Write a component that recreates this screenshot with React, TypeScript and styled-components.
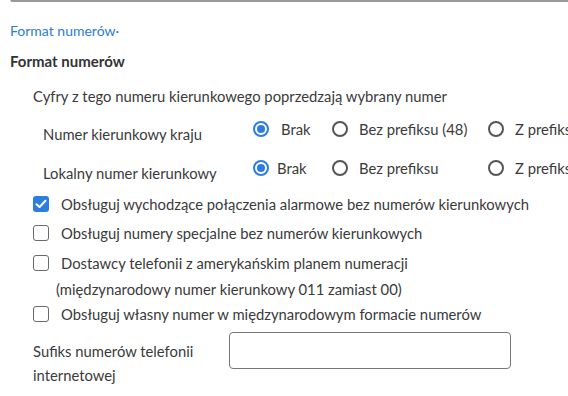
import styled, { createGlobalStyle } from 'styled-components';

const GlobalStyle = createGlobalStyle`
  body {
    margin: 0;
    background: #fff;
    font-family: Lato, "Open Sans", sans-serif;
    color: #3a3a3a;
  }
`;

const Page = styled.div`
  width: 568px;
  height: 396px;
  overflow: hidden;
  padding-left: 10px;
  box-sizing: border-box;
`;

const TopEdge = styled.div`
  height: 0;
  border-left: 1px solid #aaa;
  border-bottom: 2px solid #999;
  border-bottom-left-radius: 2px;
  margin-right: -10px;
`;

const Crumb = styled.a`
  display: block;
  margin-top: 19px;
  font-size: 14px;
  line-height: 20px;
  color: #2b7bd8;
  text-decoration: none;
`;

const Heading = styled.h2`
  margin: 9px 0 0;
  font-size: 15px;
  font-weight: 700;
  line-height: 22px;
  color: #333;
`;

const Body = styled.div`
  padding-left: 23px;
  font-size: 14.8px;
`;

const Intro = styled.p`
  margin: 14px 0 0;
  line-height: 20px;
`;

const RadioGrid = styled.div`
  display: grid;
  grid-template-columns: 220px 79px 156px auto;
  row-gap: 12px;
  margin-top: 12px;
  white-space: nowrap;
`;

const RowLabel = styled.div`
  padding-left: 10px;
  line-height: 22px;
  padding-top: ${(p: { $shift: number }) => p.$shift}px;
`;

const RadioOpt = styled.label`
  display: flex;
  align-items: center;
  gap: ${(p: { $gap: number }) => p.$gap}px;
  line-height: 22px;
  height: 22px;
`;

const RadioDot = styled.span<{ $on?: boolean }>`
  width: 16px;
  height: 16px;
  box-sizing: border-box;
  border-radius: 50%;
  border: 2px solid ${(p) => (p.$on ? '#2b7de0' : '#555')};
  display: flex;
  align-items: center;
  justify-content: center;
  flex: none;
  &::after {
    content: '';
    width: 8px;
    height: 8px;
    border-radius: 50%;
    background: ${(p) => (p.$on ? '#2b7de0' : 'transparent')};
  }
`;

const Checks = styled.div`
  display: flex;
  flex-direction: column;
  margin-top: 9px;
`;

const CheckRow = styled.label<{ $top: number }>`
  display: flex;
  align-items: center;
  gap: 12px;
  margin-top: ${(p) => p.$top}px;
  line-height: 22px;
`;

const Box = styled.span<{ $on?: boolean }>`
  width: 16px;
  height: 16px;
  box-sizing: border-box;
  border-radius: 3px;
  border: ${(p) => (p.$on ? 'none' : '1.5px solid #6a6a6a')};
  background: ${(p) => (p.$on ? '#2b7de0' : '#fff')};
  display: flex;
  align-items: center;
  justify-content: center;
  flex: none;
`;

const SubLine = styled.div`
  padding-left: 23px;
  line-height: 22px;
  margin-top: 4px;
`;

const FieldRow = styled.div`
  display: grid;
  grid-template-columns: 196px 282px;
  margin-top: 7px;
`;

const FieldLabel = styled.div`
  line-height: 24px;
  padding-top: 7px;
`;

const TextInput = styled.input`
  height: 37px;
  box-sizing: border-box;
  border: 1px solid #777;
  border-radius: 4px;
  margin: 0;
`;

const Tick = () => (
  <svg width="12" height="10" viewBox="0 0 12 10">
    <path d="M1.5 5.2 L4.5 8 L10.5 1.8" fill="none" stroke="#fff" strokeWidth="2" strokeLinecap="round" strokeLinejoin="round" />
  </svg>
);

export default function App() {
  return (
    <Page>
      <GlobalStyle />
      <TopEdge />
      <Crumb href="#">Format numerów·</Crumb>
      <Heading>Format numerów</Heading>
      <Body>
        <Intro>Cyfry z tego numeru kierunkowego poprzedzają wybrany numer</Intro>
        <RadioGrid>
          <RowLabel $shift={5}>Numer kierunkowy kraju</RowLabel>
          <RadioOpt $gap={12}><RadioDot $on />Brak</RadioOpt>
          <RadioOpt $gap={11}><RadioDot />Bez prefiksu (48)</RadioOpt>
          <RadioOpt $gap={11}><RadioDot />Z prefiksem</RadioOpt>
          <RowLabel $shift={5}>Lokalny numer kierunkowy</RowLabel>
          <RadioOpt $gap={8}><RadioDot $on />Brak</RadioOpt>
          <RadioOpt $gap={11}><RadioDot />Bez prefiksu</RadioOpt>
          <RadioOpt $gap={11}><RadioDot />Z prefiksem</RadioOpt>
        </RadioGrid>
        <Checks>
          <CheckRow $top={0}><Box $on><Tick /></Box>Obsługuj wychodzące połączenia alarmowe bez numerów kierunkowych</CheckRow>
          <CheckRow $top={7}><Box />Obsługuj numery specjalne bez numerów kierunkowych</CheckRow>
          <CheckRow $top={8}><Box />Dostawcy telefonii z amerykańskim planem numeracji</CheckRow>
          <SubLine>(międzynarodowy numer kierunkowy 011 zamiast 00)</SubLine>
          <CheckRow $top={3}><Box />Obsługuj własny numer w międzynarodowym formacie numerów</CheckRow>
        </Checks>
        <FieldRow>
          <FieldLabel>Sufiks numerów telefonii<br />internetowej</FieldLabel>
          <TextInput type="text" />
        </FieldRow>
      </Body>
    </Page>
  );
}
